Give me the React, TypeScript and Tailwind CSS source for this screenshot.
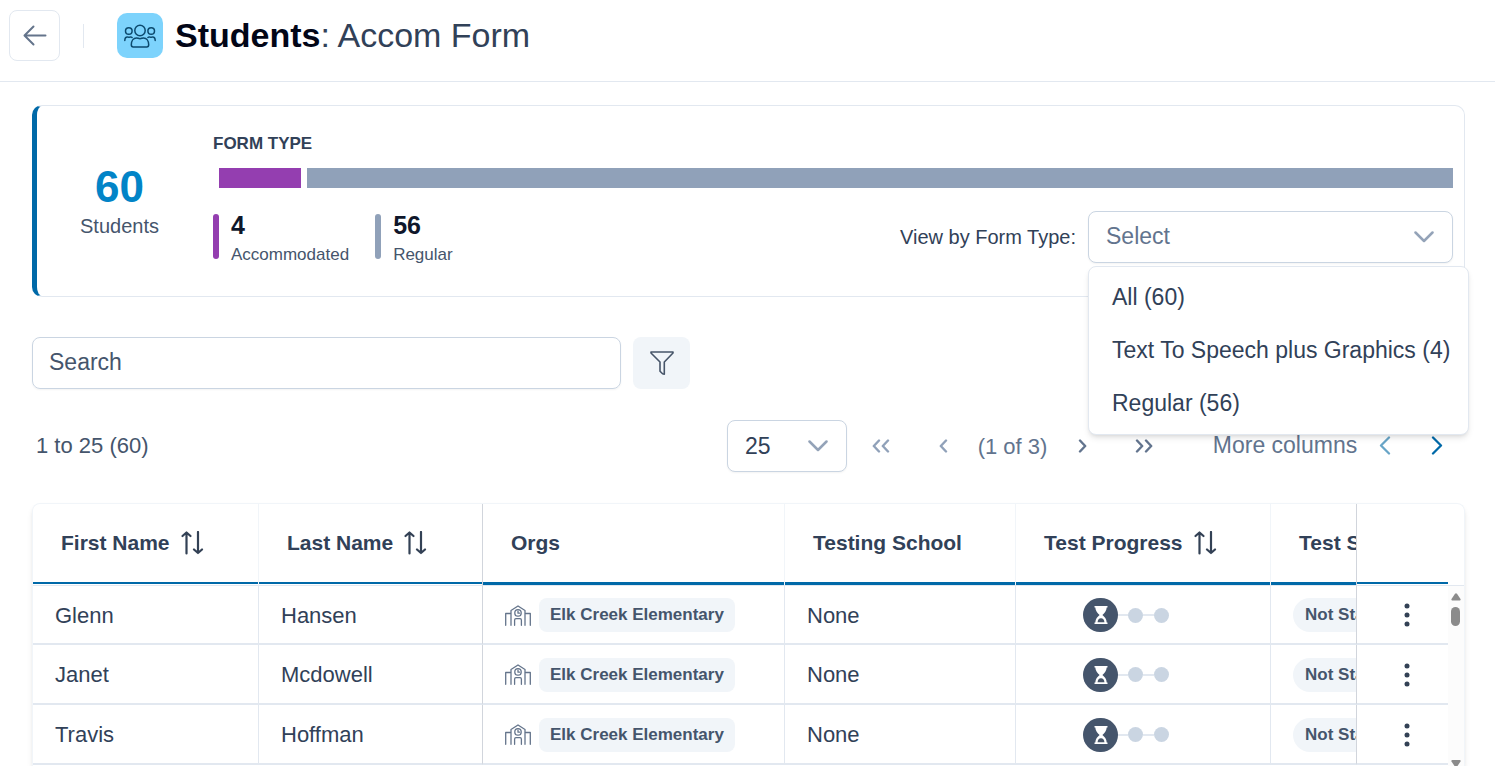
import React, { useState } from "react";

const students = [
  { first: "Glenn", last: "Hansen", org: "Elk Creek Elementary", school: "None", status: "Not Started" },
  { first: "Janet", last: "Mcdowell", org: "Elk Creek Elementary", school: "None", status: "Not Started" },
  { first: "Travis", last: "Hoffman", org: "Elk Creek Elementary", school: "None", status: "Not Started" },
];

const formTypes = ["All (60)", "Text To Speech plus Graphics (4)", "Regular (56)"];

function BackArrow() {
  return (
    <svg width="24" height="24" viewBox="0 0 24 24" fill="none" stroke="#64748b" strokeWidth="2" strokeLinecap="round" strokeLinejoin="round" aria-hidden="true">
      <path d="M22.500 11.500H2M10.500 2.500L1.500 11.500L10.500 20.500" />
    </svg>
  );
}

function GroupIcon() {
  return (
    <svg width="32" height="24" viewBox="0 0 32 24" fill="none" stroke="#0c4a6e" strokeWidth="1.500" strokeLinecap="round" strokeLinejoin="round" aria-hidden="true">
      <circle cx="16" cy="6.500" r="5.200" />
      <circle cx="4.800" cy="7" r="3.300" />
      <circle cx="27.200" cy="7" r="3.300" />
      <path d="M7.300 20.800c0-4 2.100-6.900 5.200-6.900 1.300 0 2 .8 3.500.8s2.200-.8 3.500-.8c3.100 0 5.200 2.900 5.200 6.900 0 1.300-.7 2.100-1.900 2.100H9.200c-1.200 0-1.900-.8-1.900-2.100z" />
      <path d="M.8 16.600c0-2.400 1.100-3.700 2.600-3.700.7 0 .9.400 1.600.4s.9-.4 1.600-.4c.6 0 1.100.2 1.500.6" />
      <path d="M31.200 16.600c0-2.400-1.100-3.700-2.600-3.700-.7 0-.9.400-1.600.4s-.9-.4-1.600-.4c-.6 0-1.100.2-1.500.6" />
    </svg>
  );
}

function DownChevron() {
  return (
    <svg className="pointer-events-none" width="20" height="12" viewBox="0 0 20 12" fill="none" stroke="#94a3b8" strokeWidth="2.500" strokeLinecap="round" strokeLinejoin="round" aria-hidden="true">
      <path d="M1.500 1.500L10 10L18.500 1.500" />
    </svg>
  );
}

function PageChevron({ double = false, flip = false }: { double?: boolean; flip?: boolean }) {
  return (
    <svg className={flip ? "-scale-x-100" : ""} width={double ? 18 : 9} height="14" viewBox={double ? "0 0 18 14" : "0 0 9 14"} fill="none" stroke="currentColor" strokeWidth="2.400" strokeLinecap="round" strokeLinejoin="round" aria-hidden="true">
      <path d="M7 1.500L1.800 7L7 12.500" />
      {double && <path d="M16 1.500L10.800 7L16 12.500" />}
    </svg>
  );
}

function ColumnChevron({ flip = false }: { flip?: boolean }) {
  return (
    <svg className={flip ? "-scale-x-100" : ""} width="12" height="20" viewBox="0 0 12 20" fill="none" stroke="currentColor" strokeWidth="2.300" strokeLinecap="round" strokeLinejoin="round" aria-hidden="true">
      <path d="M10 1.500L2 9.500L10 17.500" />
    </svg>
  );
}

function FunnelIcon() {
  return (
    <svg width="24" height="26" viewBox="0 0 24 26" fill="none" stroke="#475569" strokeWidth="1.600" strokeLinejoin="round" aria-hidden="true">
      <path d="M1 2H23V3L14.300 12V24.300L12.600 23.800L10 21.200V12L1 3Z" />
    </svg>
  );
}

function SortIcon() {
  return (
    <svg width="24" height="24" viewBox="0 0 24 24" fill="none" stroke="#334155" strokeWidth="2.200" strokeLinecap="round" strokeLinejoin="round" aria-hidden="true">
      <path d="M6.500 22.500V1.500M2.500 5L6.500 1.500L10.500 5" />
      <path d="M18 1V22M14 18.500L18 22L22 18.500" />
    </svg>
  );
}

function SchoolIcon() {
  return (
    <svg width="26" height="21" viewBox="0 0 26 21" fill="none" stroke="#64748b" strokeWidth="1.300" strokeLinecap="round" strokeLinejoin="round" aria-hidden="true">
      <path d="M.7 20.300V8.500H5.500M25.300 20.300V8.500H20.500" />
      <path d="M6 20.300V5.500L13 1L20 5.500V20.300" />
      <path d="M9.600 20.300V15.200C9.600 14.300 10.200 13.700 11 13.700H15C15.800 13.700 16.400 14.300 16.400 15.200V20.300" />
      <circle cx="13" cy="7.900" r="3.200" />
      <path d="M13 6V8.200H14.600" />
    </svg>
  );
}

function Hourglass() {
  return (
    <svg width="16" height="20" viewBox="0 0 16 20" aria-hidden="true">
      <path d="M1.500 1H14.500V2.600H13.700C13.500 6 11.600 8.200 9.400 10C11.600 11.800 13.500 14 13.700 17.400H14.500V19H1.500V17.400H2.300C2.500 14 4.400 11.800 6.600 10C4.400 8.200 2.500 6 2.300 2.600H1.500Z" fill="#fff" />
      <path d="M4.600 17.200C4.800 14.800 6 13.300 8 13.300S11.200 14.800 11.400 17.200Z" fill="#475569" />
    </svg>
  );
}

function VerticalDots() {
  return (
    <svg width="6" height="24" viewBox="0 0 6 24" fill="#334155" aria-hidden="true">
      <circle cx="3" cy="3" r="2.500" />
      <circle cx="3" cy="12" r="2.500" />
      <circle cx="3" cy="21" r="2.500" />
    </svg>
  );
}

function Legend({ count, label, color }: { count: number; label: string; color: string }) {
  return (
    <div className="flex gap-3 pt-[3px]">
      <span className={"h-[45px] w-[6px] rounded-full " + color} />
      <div>
        <div className="text-[25px] font-bold leading-[22px] text-slate-900">{count}</div>
        <div className="mt-2 text-[17px] leading-[22px] text-slate-600">{label}</div>
      </div>
    </div>
  );
}

function HeadCell({ label, sort = false, pinned = false, edge = "border-r border-slate-100" }: { label: string; sort?: boolean; pinned?: boolean; edge?: string }) {
  return (
    <th scope="col" className={"h-[81px] overflow-hidden p-0 align-top " + edge}>
      <div className={"flex items-center gap-2.5 whitespace-nowrap border-sky-700 pl-7 " + (pinned ? "h-20 border-b-2" : "h-[81px] border-b-[3px]")}>
        {label}
        {sort && (
          <button type="button" aria-label={"Sort by " + label}>
            <SortIcon />
          </button>
        )}
      </div>
    </th>
  );
}

export default function App() {
  const [open, setOpen] = useState(true);

  return (
    <div className="flex h-screen flex-col overflow-hidden bg-white font-['Liberation_Sans',Arial,sans-serif] text-slate-700">
      <header className="flex h-[82px] shrink-0 items-start border-b border-slate-200 pl-[9px] pt-[10px]">
        <button type="button" aria-label="Back" className="flex h-[51px] w-[51px] items-center justify-center rounded-lg border border-slate-200">
          <BackArrow />
        </button>
        <div className="ml-[23px] flex h-[51px] items-center">
          <span className="h-6 w-px bg-slate-200" />
          <span className="ml-[33px] flex h-[45px] w-[46px] items-center justify-center rounded-[10px] bg-[#7dd3fc]">
            <GroupIcon />
          </span>
          <h1 className="ml-3 pb-0.5 text-[34px] leading-[44px] text-slate-700">
            <strong className="font-bold text-[#020617]">Students</strong>: Accom Form
          </h1>
        </div>
      </header>

      <main className="flex min-h-0 flex-1 flex-col pl-8 pr-[30px] pt-[23px]">
        <section className="flex shrink-0 rounded-[10px] border border-l-[5px] border-slate-200 border-l-sky-700">
          <div className="flex w-[165px] flex-col items-center pt-[59px]">
            <div className="text-[44px] font-bold leading-[44px] text-[#0284c7]">60</div>
            <div className="mt-[5px] text-xl leading-6 text-slate-600">Students</div>
          </div>
          <div className="ml-[11px] min-w-0 flex-1 pb-[30px] pr-[11px] pt-[26px]">
            <h2 className="text-[17px] font-bold leading-6">FORM TYPE</h2>
            <div className="ml-1.5 mt-3 flex h-5 gap-1.5">
              <div className="flex-[4] bg-[#943eb0]" />
              <div className="flex-[56] bg-slate-400" />
            </div>
            <div className="mt-[23px] flex items-start justify-between">
              <div className="flex gap-[26px]">
                <Legend count={4} label="Accommodated" color="bg-[#943eb0]" />
                <Legend count={56} label="Regular" color="bg-slate-400" />
              </div>
              <div className="flex items-center">
                <label htmlFor="form-type" className="mr-3 text-xl leading-6">View by Form Type:</label>
                <div className="relative w-[365px]">
                  <select
                    id="form-type"
                    defaultValue="Select"
                    onMouseDown={(e) => {
                      e.preventDefault();
                      setOpen(!open);
                    }}
                    className="h-[52px] w-full appearance-none rounded-lg border border-slate-300 bg-white pb-0.5 pl-[17px] text-[23px] text-slate-500 shadow-xs"
                  >
                    <option>Select</option>
                  </select>
                  <span className="pointer-events-none absolute inset-y-0 right-[19px] flex items-center">
                    <DownChevron />
                  </span>
                  {open && (
                    <ul className="absolute left-0 top-[55px] z-10 min-w-[381px] rounded-lg border border-slate-200 bg-white py-1 shadow-md">
                      {formTypes.map((type) => (
                        <li key={type}>
                          <button type="button" onClick={() => setOpen(false)} className="h-[53px] w-full whitespace-nowrap pb-px pl-[23px] pr-4 text-left text-[23px]">
                            {type}
                          </button>
                        </li>
                      ))}
                    </ul>
                  )}
                </div>
              </div>
            </div>
          </div>
        </section>

        <div className="mt-10 flex shrink-0 gap-3">
          <input
            type="search"
            aria-label="Search"
            placeholder="Search"
            className="h-[52px] w-[589px] rounded-lg border border-slate-300 px-4 pb-0.5 text-[23px] shadow-xs placeholder:text-slate-600"
          />
          <button type="button" aria-label="Filter" className="flex h-[52px] w-[57px] items-center justify-center rounded-lg bg-slate-100">
            <FunnelIcon />
          </button>
        </div>

        <div className="mt-[31px] flex shrink-0 items-center justify-between pr-0.5 text-[22px] text-slate-500">
          <p className="pb-0.5 pl-1 text-slate-600">1 to 25 (60)</p>
          <nav aria-label="Pagination" className="flex items-center">
            <div className="relative mr-[3px] w-[120px]">
              <select aria-label="Rows per page" defaultValue="25" className="h-[52px] w-full appearance-none rounded-lg border border-slate-300 bg-white pl-[17px] text-[23px] text-slate-700 shadow-xs">
                <option>25</option>
                <option>50</option>
              </select>
              <span className="pointer-events-none absolute inset-y-0 right-[19px] flex items-center">
                <DownChevron />
              </span>
            </div>
            <button type="button" aria-label="First page" className="flex h-12 w-[62px] items-center justify-center text-slate-400">
              <PageChevron double />
            </button>
            <button type="button" aria-label="Previous page" className="flex h-12 w-[62px] items-center justify-center text-slate-400">
              <PageChevron />
            </button>
            <span className="w-[77px] text-center">(1 of 3)</span>
            <button type="button" aria-label="Next page" className="flex h-12 w-[62px] items-center justify-center">
              <PageChevron flip />
            </button>
            <button type="button" aria-label="Last page" className="flex h-12 w-[62px] items-center justify-center">
              <PageChevron double flip />
            </button>
            <span className="ml-9 w-[148px] whitespace-nowrap pb-0.5 text-center text-[23px]">More columns</span>
            <button type="button" aria-label="Previous columns" className="flex h-12 w-[52px] items-center justify-center text-[#68a5c7]">
              <ColumnChevron />
            </button>
            <button type="button" aria-label="Next columns" className="flex h-12 w-[52px] items-center justify-center text-sky-700">
              <ColumnChevron flip />
            </button>
          </nav>
        </div>

        <div className="mt-[31px] flex min-h-0 flex-1 rounded-t-lg border border-b-0 border-slate-100 shadow-md">
          <div className="min-w-0 flex-1 overflow-hidden">
            <table className="w-full table-fixed border-separate border-spacing-0 text-left">
              <colgroup>
                <col className="w-[226px]" />
                <col className="w-[224px]" />
                <col className="w-[302px]" />
                <col className="w-[231px]" />
                <col className="w-[255px]" />
                <col />
                <col className="w-[92px]" />
              </colgroup>
              <thead className="text-[21px] font-bold">
                <tr>
                  <HeadCell label="First Name" sort pinned />
                  <HeadCell label="Last Name" sort pinned edge="border-r border-gray-300" />
                  <HeadCell label="Orgs" />
                  <HeadCell label="Testing School" />
                  <HeadCell label="Test Progress" sort />
                  <HeadCell label="Test Status" edge="" />
                  <HeadCell label="" pinned edge="border-l border-gray-300" />
                </tr>
              </thead>
              <tbody className="text-[22px] [&_td]:h-[60px] [&_td]:border-b-2 [&_td]:border-b-slate-200 [&_td]:pb-0 [&_td]:pt-px [&>tr:first-child>td]:border-t [&>tr:first-child>td]:border-t-slate-200">
                {students.map((s) => (
                  <tr key={s.first}>
                    <td className="border-r border-r-slate-200 pl-[22px]">{s.first}</td>
                    <td className="border-r border-r-gray-300 pl-[22px]">{s.last}</td>
                    <td className="border-r border-r-slate-200 pl-[22px]">
                      <div className="flex items-center gap-2">
                        <SchoolIcon />
                        <span className="flex h-[34px] items-center whitespace-nowrap rounded-lg bg-slate-100 px-[11px] text-[17px] font-bold text-slate-600">{s.org}</span>
                      </div>
                    </td>
                    <td className="border-r border-r-slate-200 pl-[22px]">{s.school}</td>
                    <td className="border-r border-r-slate-200 pl-[67px]">
                      <div className="flex items-center">
                        <span className="flex h-[34px] w-[35px] items-center justify-center rounded-full bg-slate-600">
                          <Hourglass />
                        </span>
                        <span className="h-0.5 w-2.5 bg-slate-200" />
                        <span className="h-[15px] w-[15px] rounded-full bg-slate-300" />
                        <span className="h-0.5 w-[11px] bg-slate-200" />
                        <span className="h-[15px] w-[15px] rounded-full bg-slate-300" />
                      </div>
                    </td>
                    <td className="overflow-hidden pl-[22px]">
                      <span className="flex h-[34px] w-max items-center whitespace-nowrap rounded-full bg-slate-100 px-3 text-[17px] font-bold text-slate-600">{s.status}</span>
                    </td>
                    <td className="border-l border-l-gray-300 pl-[35px]">
                      <button type="button" aria-label={"Actions for " + s.first + " " + s.last} className="flex h-8 w-[30px] items-center justify-center">
                        <VerticalDots />
                      </button>
                    </td>
                  </tr>
                ))}
              </tbody>
            </table>
          </div>
          <div className="flex w-4 flex-col">
            <div className="h-[82px] shrink-0 border-b border-slate-200" />
            <div className="flex min-h-0 flex-1 flex-col items-center bg-[#fcfcfc] pr-px pt-[7px]">
              <svg width="10" height="8" viewBox="0 0 10 8" fill="#8b8b8b" aria-hidden="true">
                <path d="M4 .8Q5-.4 6 .8L9.500 6Q10 7.500 8.700 7.500H1.300Q0 7.500.5 6Z" />
              </svg>
              <span className="mt-1.5 h-[19px] w-[9px] rounded-full bg-[#8b8b8b]" />
              <svg className="mt-auto" width="10" height="6" viewBox="0 0 10 6" fill="#8b8b8b" aria-hidden="true">
                <path d="M1.300 0H8.700Q10 0 9.500 1.500L6.500 6H3.500L.5 1.500Q0 0 1.300 0Z" />
              </svg>
            </div>
          </div>
        </div>
      </main>
    </div>
  );
}
